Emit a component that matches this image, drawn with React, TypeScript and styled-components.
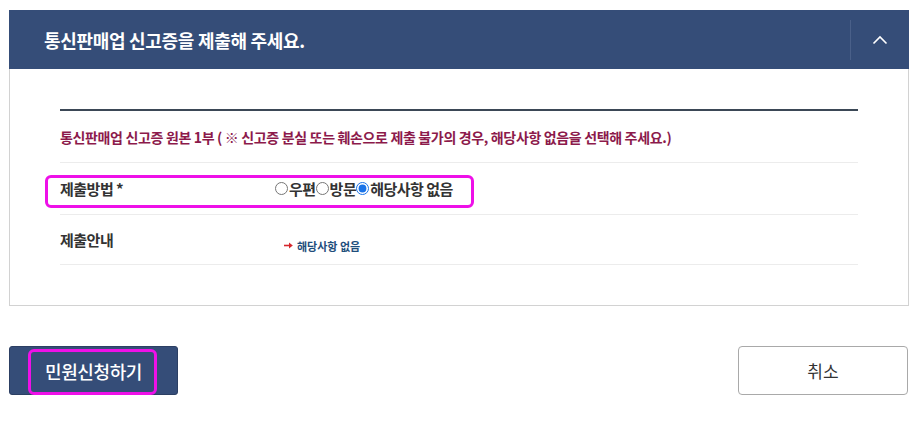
import styled, { createGlobalStyle } from "styled-components"

const GlobalStyle = createGlobalStyle`
    body {
        margin: 0;
        background: #ffffff;
        font-family: "Noto Sans CJK KR", "Noto Sans", sans-serif;
    }
`

const Page = styled.div`
    padding: 10px 0 0 9px;
    width: 900px;
`

const Panel = styled.section`
    display: flex;
    flex-direction: column;
`

const PanelHeader = styled.div`
    height: 59px;
    background: #354d78;
    display: flex;
    align-items: center;
    justify-content: space-between;
    padding-left: 35px;
`

const PanelTitle = styled.h2`
    margin: 0;
    font-size: 18px;
    font-weight: 700;
    color: #ffffff;
    letter-spacing: -0.3px;
`

const ToggleButton = styled.button`
    width: 59px;
    height: 40px;
    border: none;
    border-left: 1px solid #4a6089;
    background: transparent;
    display: flex;
    align-items: center;
    justify-content: center;
    padding: 0;
    cursor: pointer;
`

const PanelBody = styled.div`
    border: 1px solid #d2d2d2;
    border-top: none;
    padding: 40px 50px 40px 50px;
`

const TopRule = styled.div`
    height: 2px;
    background: #3b4856;
`

const Notice = styled.p`
    margin: 0;
    height: 51px;
    display: flex;
    align-items: center;
    font-size: 14px;
    font-weight: 700;
    color: #8c1a4b;
    letter-spacing: -0.35px;
    border-bottom: 1px solid #ececec;
`

interface RowProps {
    height: number;
}

const Row = styled.div<RowProps>`
    position: relative;
    height: ${props => props.height}px;
    display: flex;
    align-items: center;
    border-bottom: 1px solid #ececec;
`

const Label = styled.div`
    width: 215px;
    flex-shrink: 0;
    font-size: 15px;
    font-weight: 700;
    color: #333333;
    letter-spacing: -0.5px;
`

const RadioGroup = styled.div`
    display: flex;
    align-items: center;
`

const RadioItem = styled.label`
    display: flex;
    align-items: center;
    font-size: 15px;
    font-weight: 700;
    color: #333333;
    letter-spacing: -0.5px;
`

const Radio = styled.input`
    width: 13px;
    height: 13px;
    margin: 0 1px 0 0;
    accent-color: #1a73e8;
`

const GuideText = styled.div`
    display: flex;
    align-items: center;
    gap: 4px;
    margin-top: 12px;
    margin-left: 9px;
    font-size: 11px;
    font-weight: 700;
    color: #1f4e7c;
`

interface MarkProps {
    left: number;
    top: number;
    width: number;
    height: number;
}

const Highlight = styled.div<MarkProps>`
    position: absolute;
    left: ${props => props.left}px;
    top: ${props => props.top}px;
    width: ${props => props.width}px;
    height: ${props => props.height}px;
    box-sizing: border-box;
    border: 3px solid #ee10e8;
    border-radius: 6px;
    pointer-events: none;
`

const Actions = styled.div`
    display: flex;
    justify-content: space-between;
    margin-top: 40px;
    width: 899px;
`

const PrimaryButton = styled.button`
    position: relative;
    width: 169px;
    height: 49px;
    border: 1px solid #2c3f63;
    border-radius: 3px;
    background: #354d78;
    color: #ffffff;
    font-family: inherit;
    font-size: 18px;
    font-weight: 500;
    letter-spacing: -0.4px;
    cursor: pointer;
`

const CancelButton = styled.button`
    width: 170px;
    height: 49px;
    border: 1px solid #a9a9a9;
    border-radius: 4px;
    background: #ffffff;
    color: #333333;
    font-family: inherit;
    font-size: 17px;
    font-weight: 400;
    cursor: pointer;
`

const ChevronUp = () => (
    <svg width="16" height="10" viewBox="0 0 16 10">
        <polyline points="1.5,8.5 8,2 14.5,8.5" fill="none" stroke="#ffffff" strokeWidth="1.6" />
    </svg>
)

const RedArrow = () => (
    <svg width="9" height="7" viewBox="0 0 9 7">
        <path d="M0 3.5 H6" stroke="#d6262c" strokeWidth="1.6" />
        <path d="M5 0.5 L8.8 3.5 L5 6.5 Z" fill="#d6262c" />
    </svg>
)

const App = () => {
    return (
        <Page>
            <GlobalStyle />
            <Panel>
                <PanelHeader>
                    <PanelTitle>통신판매업 신고증을 제출해 주세요.</PanelTitle>
                    <ToggleButton aria-label="접기">
                        <ChevronUp />
                    </ToggleButton>
                </PanelHeader>
                <PanelBody>
                    <TopRule />
                    <Notice>
                        통신판매업 신고증 원본 1부 ( ※ 신고증 분실 또는 훼손으로 제출 불가의 경우, 해당사항 없음을 선택해 주세요.)
                    </Notice>
                    <Row height={51}>
                        <Label>제출방법 *</Label>
                        <RadioGroup>
                            <RadioItem>
                                <Radio type="radio" name="method" />우편
                            </RadioItem>
                            <RadioItem>
                                <Radio type="radio" name="method" />방문
                            </RadioItem>
                            <RadioItem>
                                <Radio type="radio" name="method" defaultChecked />해당사항 없음
                            </RadioItem>
                        </RadioGroup>
                        <Highlight left={-15} top={12} width={429} height={33} />
                    </Row>
                    <Row height={49}>
                        <Label>제출안내</Label>
                        <GuideText>
                            <RedArrow />
                            해당사항 없음
                        </GuideText>
                    </Row>
                </PanelBody>
            </Panel>
            <Actions>
                <PrimaryButton>
                    민원신청하기
                    <Highlight left={18} top={2} width={129} height={46} />
                </PrimaryButton>
                <CancelButton>취소</CancelButton>
            </Actions>
        </Page>
    )
}

export default App
